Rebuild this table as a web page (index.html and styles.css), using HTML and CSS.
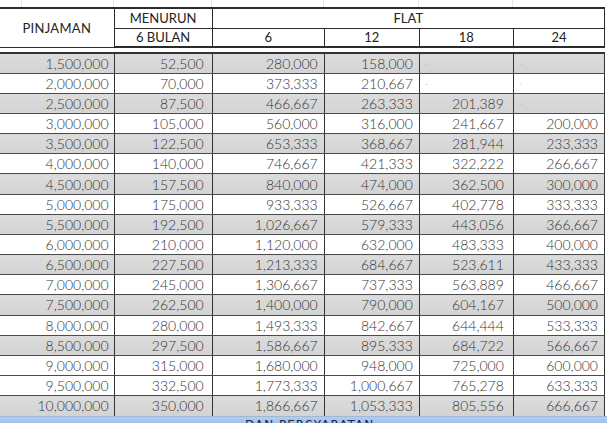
FILE: index.html
```html
<!DOCTYPE html>
<html>
<head>
<meta charset="utf-8">
<link rel="stylesheet" href="styles.css">
</head>
<body>
<div class="grid-top">
  <span class="gl w22"></span><span class="gl w92"></span><span class="gl w98"></span><span class="gl w112"></span><span class="gl w95"></span><span class="gl w94"></span><span class="gl w92 last"></span>
</div>
<table class="rates">
  <colgroup>
    <col class="c1"><col class="c2"><col class="c3"><col class="c4"><col class="c5"><col class="c6">
  </colgroup>
  <thead>
    <tr class="h1">
      <th rowspan="2" class="pin">PINJAMAN</th>
      <th>MENURUN</th>
      <th colspan="4">FLAT</th>
    </tr>
    <tr class="h2">
      <th>6 BULAN</th>
      <th>6</th><th>12</th><th>18</th><th>24</th>
    </tr>
    <tr class="gap"><td colspan="6"></td></tr>
  </thead>
  <tbody>
    <tr class="g"><td>1,500,000</td><td>52,500</td><td>280,000</td><td>158,000</td><td class="dash">-</td><td class="dash">-</td></tr>
    <tr><td>2,000,000</td><td>70,000</td><td>373,333</td><td>210,667</td><td class="dash">-</td><td class="dash">-</td></tr>
    <tr class="g"><td>2,500,000</td><td>87,500</td><td>466,667</td><td>263,333</td><td>201,389</td><td class="dash">-</td></tr>
    <tr><td>3,000,000</td><td>105,000</td><td>560,000</td><td>316,000</td><td>241,667</td><td>200,000</td></tr>
    <tr class="g"><td>3,500,000</td><td>122,500</td><td>653,333</td><td>368,667</td><td>281,944</td><td>233,333</td></tr>
    <tr><td>4,000,000</td><td>140,000</td><td>746,667</td><td>421,333</td><td>322,222</td><td>266,667</td></tr>
    <tr class="g"><td>4,500,000</td><td>157,500</td><td>840,000</td><td>474,000</td><td>362,500</td><td>300,000</td></tr>
    <tr><td>5,000,000</td><td>175,000</td><td>933,333</td><td>526,667</td><td>402,778</td><td>333,333</td></tr>
    <tr class="g"><td>5,500,000</td><td>192,500</td><td>1,026,667</td><td>579,333</td><td>443,056</td><td>366,667</td></tr>
    <tr><td>6,000,000</td><td>210,000</td><td>1,120,000</td><td>632,000</td><td>483,333</td><td>400,000</td></tr>
    <tr class="g"><td>6,500,000</td><td>227,500</td><td>1,213,333</td><td>684,667</td><td>523,611</td><td>433,333</td></tr>
    <tr><td>7,000,000</td><td>245,000</td><td>1,306,667</td><td>737,333</td><td>563,889</td><td>466,667</td></tr>
    <tr class="g"><td>7,500,000</td><td>262,500</td><td>1,400,000</td><td>790,000</td><td>604,167</td><td>500,000</td></tr>
    <tr><td>8,000,000</td><td>280,000</td><td>1,493,333</td><td>842,667</td><td>644,444</td><td>533,333</td></tr>
    <tr class="g"><td>8,500,000</td><td>297,500</td><td>1,586,667</td><td>895,333</td><td>684,722</td><td>566,667</td></tr>
    <tr><td>9,000,000</td><td>315,000</td><td>1,680,000</td><td>948,000</td><td>725,000</td><td>600,000</td></tr>
    <tr><td>9,500,000</td><td>332,500</td><td>1,773,333</td><td>1,000,667</td><td>765,278</td><td>633,333</td></tr>
    <tr class="g"><td>10,000,000</td><td>350,000</td><td>1,866,667</td><td>1,053,333</td><td>805,556</td><td>666,667</td></tr>
  </tbody>
</table>
<div class="band"><span class="band-text">DAN PERSYARATAN</span></div>
</body>
</html>
```

FILE: styles.css
```css
html, body {
  margin: 0;
  padding: 0;
  background: #ffffff;
  width: 607px;
  height: 423px;
  overflow: hidden;
}

.grid-top {
  display: flex;
  height: 7px;
}
.gl {
  height: 7px;
  border-right: 1px solid #e6e6e6;
  box-sizing: border-box;
}
.w22 { width: 22px; }
.w92 { width: 92px; }
.w98 { width: 98px; }
.w112 { width: 112px; }
.w95 { width: 95px; }
.w94 { width: 94px; }
.gl.last { border-right: none; }

.rates {
  border-collapse: collapse;
  table-layout: fixed;
  width: 605px;
  font-family: "Lato", "Liberation Sans", sans-serif;
  color: #363636;
}
.c1 { width: 114px; }
.c2 { width: 98px; }
.c3 { width: 112px; }
.c4 { width: 95px; }
.c5 { width: 94px; }
.c6 { width: 91px; }

.rates th {
  font-family: "Lato", "Liberation Sans", sans-serif;
  font-weight: 400;
  font-size: 13px;
  color: #232323;
  border: 1px solid #2b2b2b;
  padding: 0;
  text-align: center;
  background: #fff;
}
.rates th:first-child { border-left: none; }
.h1 th { border-top: 2px solid #2b2b2b; }
.h1 { height: 20px; }
.h2 { height: 19px; }
.h2 th { border-bottom: 2px solid #2b2b2b; }
.pin { border-bottom: 2px solid #2b2b2b; letter-spacing: 0.3px; }

.gap td {
  height: 4px;
  padding: 0;
  border: none;
  background: #fff;
}

.rates tbody tr { height: 20.17px; }
.rates tbody td {
  font-size: 14px;
  font-weight: 300;
  text-align: right;
  padding: 0 6px 0 0;
  border-left: 1px solid #333;
  border-right: 1px solid #333;
  border-top: 1px solid #4a4a4a;
  border-bottom: 1px solid #4a4a4a;
  white-space: nowrap;
  line-height: 17px;
}
.rates tbody td:first-child { border-left: none; padding-right: 5px; }
.rates tbody td:nth-child(2) { padding-right: 8px; }
.rates tbody td:nth-child(5) { padding-right: 9px; }
.rates tbody tr:first-child td { border-top: 2px solid #333; }
.rates tbody tr.g td { background: linear-gradient(#dcdcdc, #d3d3d3); }
.rates tbody tr:last-child td { border-bottom: none; }

.rates tbody td.dash {
  text-align: left;
  padding-left: 5px;
  font-size: 9px;
  color: #aaa;
}

.band {
  height: 12px;
  background: linear-gradient(#b3cdee, #92b5e2);
  border-top: 1px solid #9fb9d9;
  padding-left: 245px;
  overflow: hidden;
}
.band-text {
  display: block;
  font-family: "DejaVu Sans", sans-serif;
  font-size: 12px;
  letter-spacing: 1px;
  color: #1e2740;
  line-height: 12px;
  margin-top: 2px;
}
```
